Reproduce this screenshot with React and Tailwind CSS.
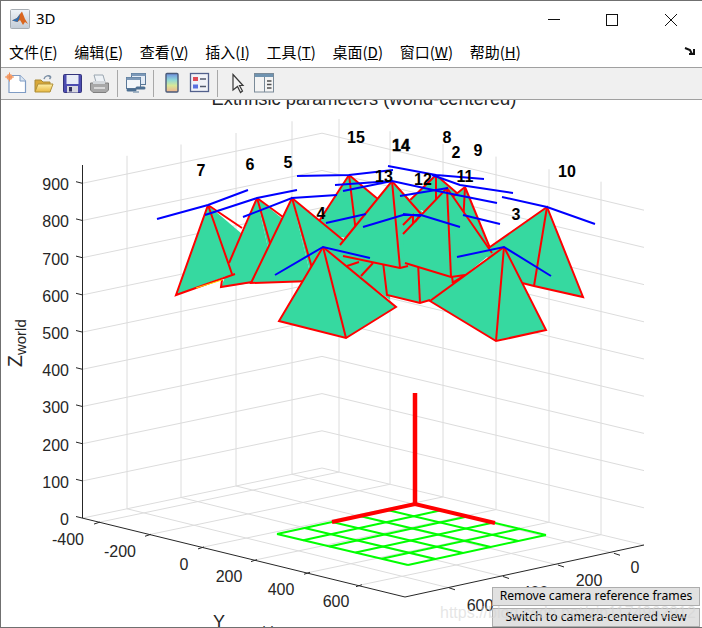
const RED = '#ff0000'
const BLUE = '#0000ff'
const TEAL = '#36d9a0'

const menus = [
  ['文件', 'F'],
  ['编辑', 'E'],
  ['查看', 'V'],
  ['插入', 'I'],
  ['工具', 'T'],
  ['桌面', 'D'],
  ['窗口', 'W'],
  ['帮助', 'H'],
]

// back to front, each piece is fill polygons and red edges
const pieces = [
  { // 15
    fill: [[349,175, 312,232, 358,240], [349,175, 358,240, 385,205]],
    edges: [[349,175, 312,232], [349,175, 356,232], [349,175, 385,205]],
  },
  { // 8
    fill: [[436,175, 405,205, 436,215], [436,175, 436,215, 470,205]],
    edges: [[436,175, 405,205], [436,175, 436,210], [436,175, 465,200]],
  },
  { // 11
    fill: [[465,187, 445,203, 463,225], [465,187, 463,225, 490,250]],
    edges: [[465,187, 445,203], [465,187, 463,225], [465,187, 492,253]],
  },
  { // middle patch behind 4 and 13
    fill: [[338,240, 323,250, 390,300, 390,255]],
    edges: [[347,266, 359,262], [361,276, 373,263]],
  },
  { // 1
    fill: [[383,262, 387,295, 420,303, 418,262], [418,262, 420,303, 430,300, 470,272]],
    edges: [[383,262, 387,295, 420,303, 430,300], [418,262, 420,303], [452,277, 453,283], [465,275, 452,283]],
  },
  { // 10
    fill: [[547,207, 482,252, 510,280, 534,286], [547,207, 534,286, 583,297]],
    edges: [[480,254, 547,207, 583,297, 534,286, 518,282], [547,207, 534,286]],
  },
  { // 7 back face
    fill: [[208,205, 232,274, 255,245]],
    edges: [[208,205, 242,228]],
  },
  { // 6
    fill: [[257,198, 221,287, 275,280], [257,198, 275,280, 290,225]],
    edges: [[222,280, 221,287, 252,282], [257,198, 229,263], [257,198, 270,243], [257,198, 283,217]],
  },
  { // 7 front face
    fill: [[208,205, 176,295, 232,274]],
    edges: [[208,205, 176,295, 235,274], [208,205, 232,274]],
  },
  { // 5
    fill: [[292,198, 251,283, 312,281], [292,198, 312,281, 335,265, 343,240]],
    edges: [[343,240, 292,198, 251,283, 312,281], [292,198, 312,268]],
  },
  { // 13
    fill: [[392,181, 340,245, 343,256, 400,268], [392,181, 400,268, 420,260, 430,220]],
    edges: [[340,245, 392,181, 421,214], [392,181, 400,268], [343,256, 400,268, 408,266]],
  },
  { // 12
    fill: [[447,188, 403,234, 405,263, 451,277], [447,188, 451,277, 465,275, 492,253]],
    edges: [[403,234, 447,188, 492,253], [447,188, 451,277], [405,263, 451,277, 465,275]],
  },
  { // 4
    fill: [[323,247, 279,321, 346,338], [323,247, 346,338, 396,307]],
    edges: [[323,247, 279,321, 346,338, 396,307, 323,247], [323,247, 346,338]],
  },
  { // 3
    fill: [[504,247, 430,301, 496,341], [504,247, 496,341, 546,330]],
    edges: [[504,247, 430,301, 496,341, 546,330, 504,247], [504,247, 496,341]],
  },
]

const blueLines = [
  [157,219, 208,205, 248,190],
  [205,215, 257,198, 297,190],
  [243,217, 292,198, 337,195],
  [297,176, 349,175, 393,170],
  [275,275, 323,247, 370,258],
  [326,223, 366,214],
  [363,227, 403,215, 421,215, 460,227],
  [403,214, 421,216],
  [335,185, 392,181, 447,193, 497,203],
  [343,191, 392,181],
  [388,166, 436,175, 484,179],
  [432,175, 460,185, 513,193],
  [400,196, 448,188],
  [463,215, 500,224],
  [457,257, 504,247, 551,276],
  [502,197, 547,207, 595,224],
]

const extraRed = [
  [403,225, 414,214],
  [413,215, 413,223],
  [420,215, 415,222],
]

const numbers = [
  ['7', 201, 176], ['6', 250, 170], ['5', 288, 168], ['4', 321, 219],
  ['15', 356, 143], ['14', 401, 151], ['13', 384, 182], ['12', 423, 185],
  ['11', 465, 182], ['8', 447, 143], ['2', 456, 158], ['9', 478, 156],
  ['10', 567, 177], ['3', 516, 220],
]

const leftWall = [127, 181, 236, 292]
const rightWall = [339, 390, 443, 496, 549, 601]
const zLevels = [0, 1, 2, 3, 4, 5, 6, 7, 8, 9]

const lerp = (a, b, t) => a + (b - a) * t

function pts(list) {
  let out = ''
  for (let i = 0; i < list.length; i += 2) out += `${list[i]},${list[i + 1]} `
  return out
}

function Plot() {
  const leftY = x => 518 - (x - 83) * 50 / 239
  const rightY = x => 468 + (x - 322) * 0.239

  const floor = []
  for (let i = 0; i <= 5; i++) {
    const t = i / 5
    floor.push([lerp(415, 277, t), lerp(504, 534, t), lerp(546, 408, t), lerp(535, 565, t)])
    floor.push([lerp(415, 546, t), lerp(504, 535, t), lerp(277, 408, t), lerp(534, 565, t)])
  }

  return (
    <svg viewBox="1 100 701 527" className="block w-[701px] h-[527px]" style={{ fontFamily: '"Liberation Sans", Arial, sans-serif' }}>
      <text x="364" y="104.5" textAnchor="middle" fontSize="18.3" fill="#262626">Extrinsic parameters (world-centered)</text>

      {/* box grid */}
      <g stroke="#dcdcdc" strokeWidth="1" fill="none">
        {zLevels.map(k => (
          <g key={k}>
            <line x1="83" y1={518 - 37.2 * k} x2="322" y2={468 - 37.2 * k} />
            <line x1="322" y1={468 - 37.2 * k} x2="644" y2={545 - 37.2 * k} />
          </g>
        ))}
        {leftWall.map(x => (
          <g key={x}>
            <line x1={x} y1={leftY(x)} x2={x} y2={leftY(x) - 353} />
            <line x1={x} y1={leftY(x)} x2={x + 322} y2={leftY(x) + 79} />
          </g>
        ))}
        {rightWall.map(x => (
          <g key={x}>
            <line x1={x} y1={rightY(x)} x2={x} y2={rightY(x) - 353} />
            <line x1={x} y1={rightY(x)} x2={x - 239} y2={rightY(x) + 50} />
          </g>
        ))}
      </g>

      {/* axes */}
      <g stroke="#262626" strokeWidth="1" fill="none">
        <line x1="82.5" y1="165" x2="82.5" y2="518" />
        <line x1="82" y1="518" x2="405" y2="597" />
        <line x1="405" y1="597" x2="644" y2="545" />
        {zLevels.map(k => (
          <line key={k} x1="76" y1={516.5 - 37.2 * k} x2="82" y2={518 - 37.2 * k} />
        ))}
        {rightWall.map(x => (
          <line key={x} x1={x - 239} y1={rightY(x) + 50} x2={x - 245} y2={rightY(x) + 52} />
        ))}
        {leftWall.map(x => (
          <line key={x} x1={x + 322} y1={leftY(x) + 79} x2={x + 328} y2={leftY(x) + 81} />
        ))}
      </g>

      {/* tick labels */}
      <g fontSize="16" fill="#262626">
        {zLevels.map(k => (
          <text key={k} x="69" y={525 - 37.2 * k} textAnchor="end">{k * 100}</text>
        ))}
        <text x="68" y="545" textAnchor="middle">-400</text>
        <text x="120" y="557" textAnchor="middle">-200</text>
        <text x="184" y="570" textAnchor="middle">0</text>
        <text x="229" y="582" textAnchor="middle">200</text>
        <text x="281" y="595" textAnchor="middle">400</text>
        <text x="336" y="607" textAnchor="middle">600</text>
        <text x="635" y="573" textAnchor="middle">0</text>
        <text x="589" y="586" textAnchor="middle">200</text>
        <text x="535" y="598" textAnchor="middle">400</text>
        <text x="480" y="611" textAnchor="middle">600</text>
      </g>
      <text transform="translate(22 367) rotate(-90)" fontSize="19.5" fill="#262626">
        Z<tspan dy="4" fontSize="15">world</tspan>
      </text>
      <text x="213" y="628" fontSize="18" fill="#262626">
        Y<tspan dy="9" dx="15" fontSize="14">world</tspan>
      </text>

      {/* checkerboard */}
      <g stroke="#00ff00" strokeWidth="2">
        {floor.map((l, i) => (
          <line key={i} x1={l[0]} y1={l[1]} x2={l[2]} y2={l[3]} />
        ))}
      </g>
      <g stroke={RED} fill="none">
        <line x1="415" y1="393" x2="415" y2="505" strokeWidth="4.5" />
        <polyline points="332,522 415,504 495,523" strokeWidth="4" />
      </g>

      {/* cameras */}
      {pieces.map((p, i) => (
        <g key={i}>
          {p.fill.map((f, j) => (
            <polygon key={j} points={pts(f)} fill={TEAL} />
          ))}
          {p.edges.map((e, j) => (
            <polyline key={j} points={pts(e)} fill="none" stroke={RED} strokeWidth="2" />
          ))}
        </g>
      ))}
      <line x1="196" y1="288" x2="222" y2="280" stroke="#ffd800" strokeWidth="1" />
      {extraRed.map((e, i) => (
        <polyline key={i} points={pts(e)} fill="none" stroke={RED} strokeWidth="2" />
      ))}
      {blueLines.map((b, i) => (
        <polyline key={i} points={pts(b)} fill="none" stroke={BLUE} strokeWidth="2" />
      ))}
      <g fontSize="16" fontWeight="700" fill="#000000" textAnchor="middle">
        {numbers.map(([t, x, y]) => (
          <text key={t} x={x} y={y} stroke={t === '14' ? '#000000' : 'none'} strokeWidth="0.5">{t}</text>
        ))}
      </g>
    </svg>
  )
}

function MatlabIcon() {
  return (
    <svg width="20" height="20" viewBox="0 0 20 20">
      <defs>
        <linearGradient id="mbox" x1="0" y1="0" x2="0" y2="1">
          <stop offset="0" stopColor="#eef3f8" />
          <stop offset="1" stopColor="#c3ccd6" />
        </linearGradient>
      </defs>
      <rect x="0.5" y="0.5" width="19" height="19" rx="1" fill="url(#mbox)" stroke="#a7adb3" />
      <path d="M2 11.5 L7 9 L10 5 L12 2.5 L15 10 L18 15 L15 13 L13 16 L10 11 L7.5 13 Z" fill="#d9661f" />
      <path d="M2 11.5 L7 9 L10 5 L9.5 9 L7.5 13 Z" fill="#2f6fb0" />
    </svg>
  )
}

function ToolIcons() {
  return (
    <svg width="280" height="31" viewBox="0 68 280 31" className="block">
      <defs>
        <linearGradient id="cbar" x1="0" y1="0" x2="0" y2="1">
          <stop offset="0" stopColor="#6f8fe0" />
          <stop offset="0.35" stopColor="#8fd8d8" />
          <stop offset="0.65" stopColor="#d8e898" />
          <stop offset="1" stopColor="#f0b090" />
        </linearGradient>
        <linearGradient id="folder" x1="0" y1="0" x2="0" y2="1">
          <stop offset="0" stopColor="#fff0a8" />
          <stop offset="1" stopColor="#e8b840" />
        </linearGradient>
      </defs>

      {/* new */}
      <path d="M8 75.5 H19 L24.5 81 V92.5 H8 Z" fill="#ffffff" stroke="#7f9cc4" strokeWidth="1.2" />
      <path d="M19 75.5 V81 H24.5" fill="#dbe6f2" stroke="#7f9cc4" />
      <circle cx="8.5" cy="77" r="3" fill="#f4a070" />
      <path d="M8.5 72.5 V81.5 M4 77 H13" stroke="#ef8f55" strokeWidth="1" />

      {/* open */}
      <path d="M34 91.5 V80 H40 L42 82 H49 V91.5 Z" fill="#d9a838" stroke="#a88a38" />
      <path d="M34 92 L37 84 H52 L49 92 Z" fill="url(#folder)" stroke="#b09038" />
      <path d="M43 79 C44 75.5 48 75 50 77 M50 77 L48.5 79 M50 77 L47.5 76" fill="none" stroke="#7b8fa5" strokeWidth="1.4" />

      {/* save */}
      <rect x="62.5" y="74.5" width="18" height="18" rx="1" fill="#4c4cb0" stroke="#34347c" />
      <rect x="65.5" y="75" width="12" height="9" fill="#e8ecf6" />
      <rect x="66" y="86" width="11" height="6.5" fill="#d8d8e0" />
      <rect x="68" y="87" width="3" height="4.5" fill="#30305c" />

      {/* print */}
      <path d="M93 75 H102 L104 82 H95 Z" fill="#eef2f6" stroke="#9aa6b0" />
      <path d="M89.5 83 H107.5 V90 L105 92.5 H92 L89.5 90 Z" fill="#a8a8a8" stroke="#808080" />
      <rect x="92" y="81" width="12" height="3" fill="#d4d8dc" />
      <rect x="93" y="87" width="11" height="2" fill="#d8d8d8" />

      <line x1="116.5" y1="70" x2="116.5" y2="97" stroke="#a8a8a8" />

      {/* link plot */}
      <rect x="130.5" y="73.5" width="14" height="11" fill="#e4ecf6" stroke="#5a7898" />
      <rect x="130.5" y="73.5" width="14" height="2.5" fill="#7d99b8" />
      <rect x="125.5" y="77.5" width="14" height="11" fill="#f2f6fa" stroke="#5a7898" />
      <rect x="125.5" y="77.5" width="14" height="2.5" fill="#7d99b8" />
      <path d="M127 90 H134 M136 88 H143" stroke="#4c6f92" strokeWidth="3" strokeLinecap="round" />
      <path d="M132 92 H138" stroke="#8aa0b6" strokeWidth="1.5" />

      <line x1="152.5" y1="70" x2="152.5" y2="97" stroke="#a8a8a8" />

      {/* colorbar */}
      <rect x="165" y="73.5" width="12" height="18.5" rx="1" fill="url(#cbar)" stroke="#4a5a78" strokeWidth="1.4" />

      {/* legend */}
      <rect x="189.5" y="73.5" width="18" height="18" fill="#f0f2f8" stroke="#52608c" strokeWidth="1.3" />
      <rect x="192" y="77" width="5" height="4" fill="#e04a55" />
      <rect x="192" y="84.5" width="5" height="4" fill="#5a70e0" />
      <path d="M199 79 H205 M199 86.5 H205" stroke="#50586c" strokeWidth="1.5" />

      <line x1="216.5" y1="70" x2="216.5" y2="97" stroke="#a8a8a8" />

      {/* cursor */}
      <path d="M232 74.5 L242 85.5 L238.5 85.5 L241.5 91 L239.5 92.5 L236.5 86.5 L232 90 Z" fill="#f4f4f4" stroke="#383838" strokeWidth="1.2" />

      {/* plot browser */}
      <rect x="253.5" y="73.5" width="19" height="18.5" fill="#f4f4f4" stroke="#7a8a98" />
      <rect x="254" y="74" width="18" height="3" fill="#6f93b0" />
      <line x1="263.5" y1="77" x2="263.5" y2="92" stroke="#7a8a98" />
      <path d="M266 81 H270.5 M266 84.5 H270.5 M266 88 H270.5" stroke="#505050" strokeWidth="1.4" />
    </svg>
  )
}

export default function App() {
  return (
    <div className="relative flex flex-col w-[702px] h-[628px] bg-white border-t border-b border-l border-[#707070] overflow-hidden">
      <div className="flex items-center h-[35px] shrink-0">
        <div className="ml-[9px] mt-[1px]"><MatlabIcon /></div>
        <span className="ml-[6px] text-[15px] text-black font-['Noto_Sans',sans-serif]">3D</span>
        <svg width="140" height="16" viewBox="0 0 140 16" className="ml-auto mr-[14px] mt-[2px]" fill="none" stroke="#111111" strokeWidth="1">
          <line x1="0" y1="7.5" x2="12" y2="7.5" />
          <rect x="58.5" y="2.5" width="11" height="11" />
          <path d="M117 2 L129 14 M129 2 L117 14" />
        </svg>
      </div>

      <div className="relative flex items-center gap-[16.7px] h-[32px] shrink-0 pl-[8px] pb-[1px] border-b border-[#a0a0a0] text-[15px] text-black font-['Noto_Sans_CJK_SC',sans-serif]">
        {menus.map(([name, key]) => (
          <span key={key} className="whitespace-nowrap leading-none">
            {name}(<span className="underline">{key}</span>)
          </span>
        ))}
        <svg width="12" height="10" viewBox="0 0 12 10" className="absolute right-[6px] top-[11px]">
          <path d="M1 1 L6 3 L8 7 M5 7 H10 V2" fill="none" stroke="#111111" strokeWidth="2" />
        </svg>
      </div>

      <div className="h-[32px] shrink-0 bg-[#f0f0f0] border-b border-[#a0a0a0]">
        <ToolIcons />
      </div>

      <div className="flex-1 min-h-0 overflow-hidden">
        <Plot />
      </div>

      <div className="absolute left-[491px] top-[586px] flex flex-col gap-[2px] w-[208px] font-['Noto_Sans',sans-serif] text-[12.2px] text-black">
        <div className="flex items-center justify-center h-[19px] bg-[#e1e1e1] border border-[#adadad] whitespace-nowrap">Remove camera reference frames</div>
        <div className="flex items-center justify-center h-[19px] bg-[#e1e1e1] border border-[#adadad] whitespace-nowrap">Switch to camera-centered view</div>
      </div>
      <div className="absolute left-[439px] top-[600px] text-[16px] whitespace-nowrap text-[#d4d4d4]/60 font-['Liberation_Sans',sans-serif]">https://blog.csdn.net/zin1174962912</div>
    </div>
  )
}
